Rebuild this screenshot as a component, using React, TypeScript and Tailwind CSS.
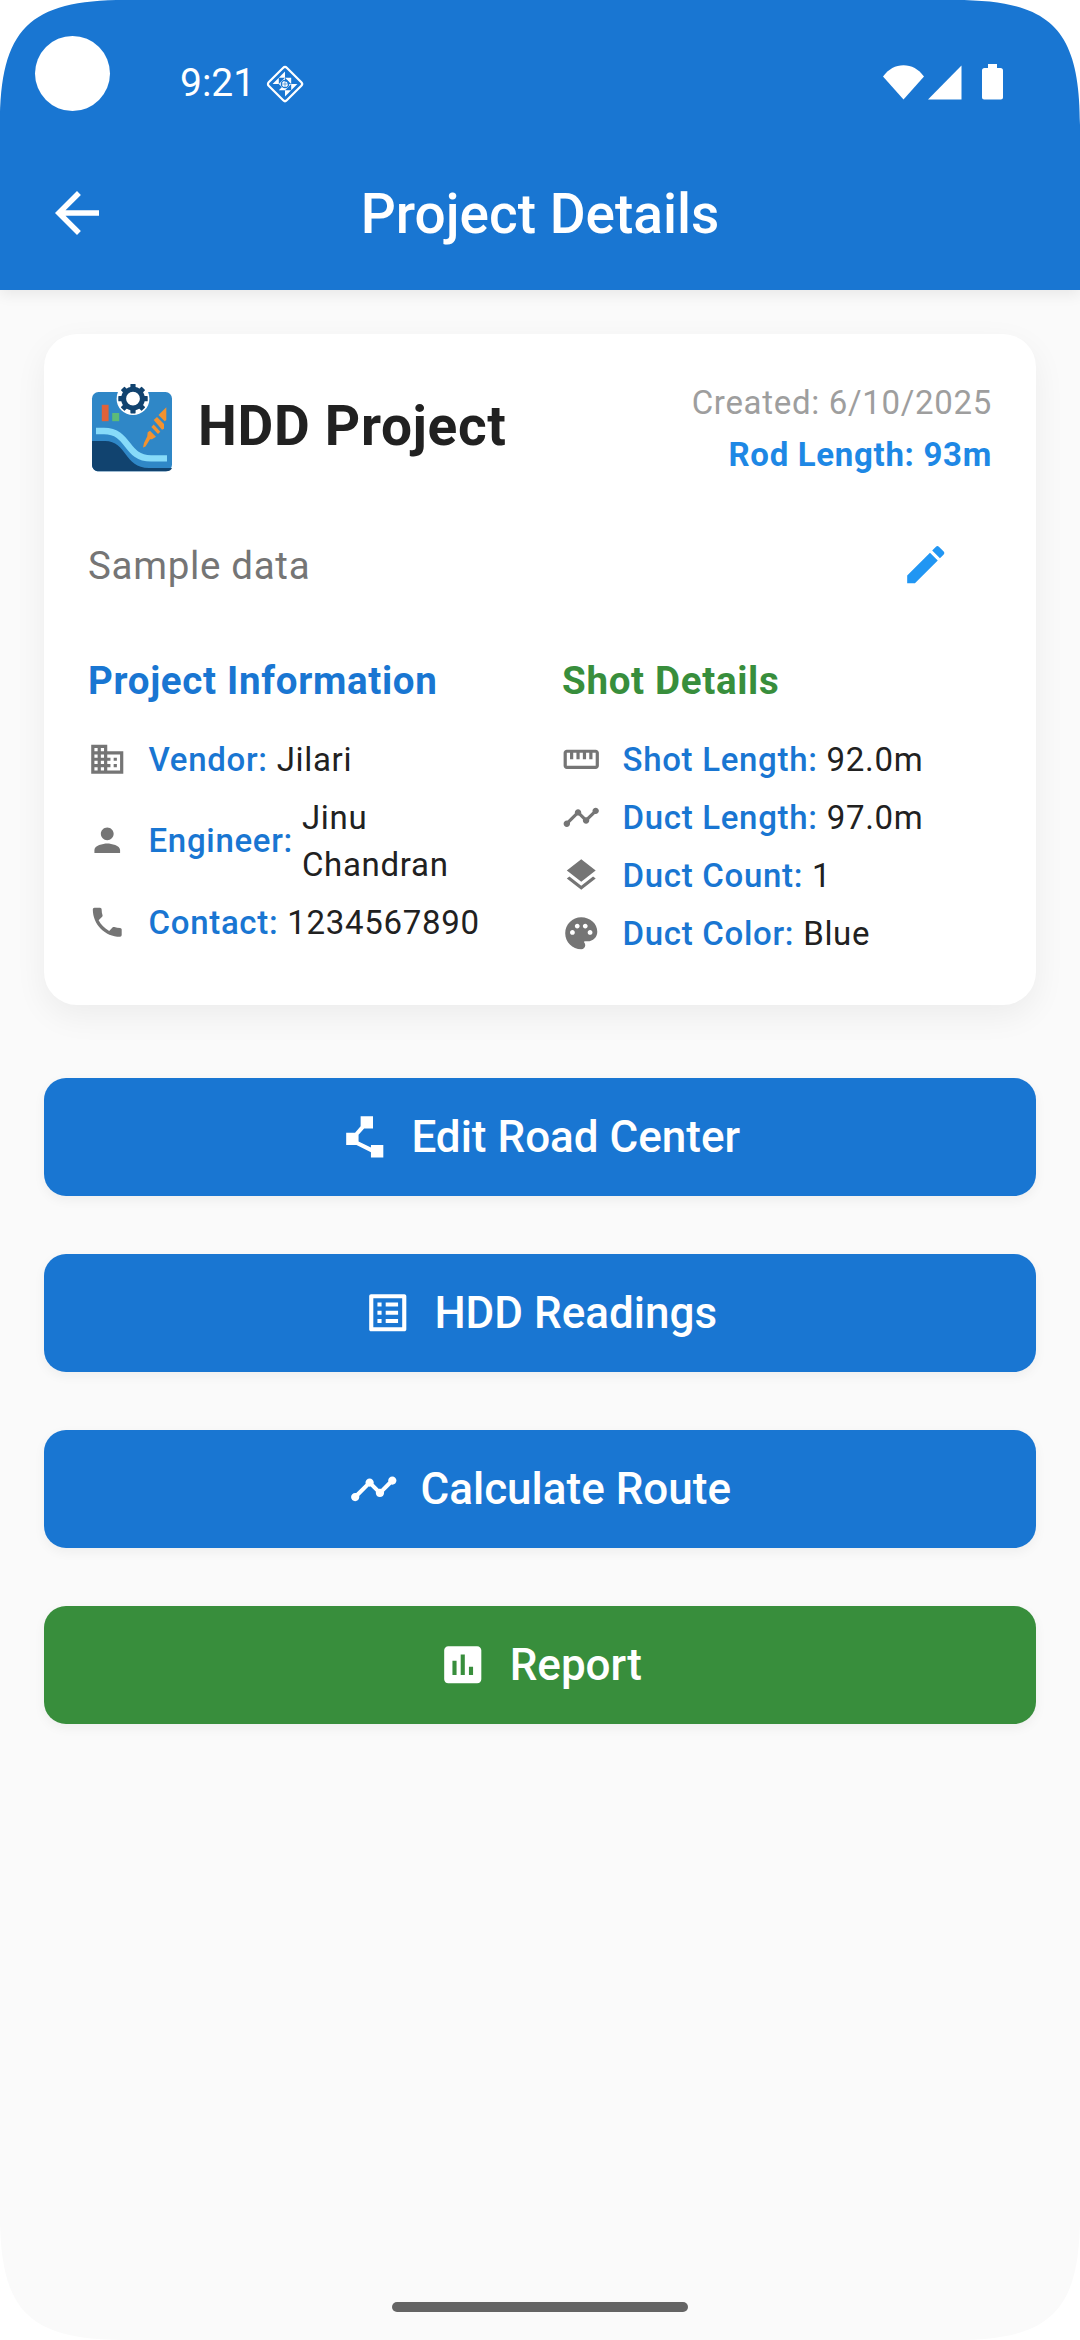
import type { ReactNode } from "react";
import type { IconType } from "react-icons";
import {
    MdArrowBack,
    MdAssessment,
    MdBusiness,
    MdEdit,
    MdLayers,
    MdListAlt,
    MdPerson,
    MdPhone,
    MdPolyline,
    MdStraighten,
    MdTimeline,
} from "react-icons/md";

function PaletteIcon({ className }: { className?: string }) {
    return (
        <svg viewBox="0 0 24 24" fill="currentColor" className={className}>
            <path d="M12 2C6.49 2 2 6.49 2 12s4.49 10 10 10c1.38 0 2.5-1.12 2.5-2.5 0-.61-.23-1.2-.64-1.67-.08-.1-.13-.21-.13-.33 0-.28.22-.5.5-.5H16c3.31 0 6-2.69 6-6 0-4.96-4.49-9-10-9zm5.5 11c-.83 0-1.5-.67-1.5-1.5s.67-1.5 1.5-1.5 1.5.67 1.5 1.5-.67 1.5-1.5 1.5zm-3-4c-.83 0-1.5-.67-1.5-1.5S13.67 6 14.5 6s1.5.67 1.5 1.5S15.33 9 14.5 9zM5 11.5c0-.83.67-1.5 1.5-1.5s1.5.67 1.5 1.5S7.33 13 6.5 13 5 12.33 5 11.5zm6-4c0 .83-.67 1.5-1.5 1.5S8 8.33 8 7.5 8.67 6 9.5 6s1.5.67 1.5 1.5z" />
        </svg>
    );
}

function ProjectLogo() {
    return (
        <svg viewBox="8 14 88 88" className="h-[88px] w-[88px] shrink-0">
            <rect x="12" y="22" width="80" height="79.3" rx="6.5" fill="#2f87c7" />
            <path d="M12 71H25C47 71 44 98 69 98H92C91.5 100 89 101.3 86 101.3H18.5C15 101.3 12 98.5 12 95Z" fill="#11436f" />
            <path d="M16 61H24C50 61 45 88.4 71 88.4H87" fill="none" stroke="#87dbf9" strokeWidth="6.4" />
            <rect x="21.8" y="34.8" width="6.8" height="16.4" fill="#e0623a" />
            <rect x="32.2" y="43" width="7" height="8.2" fill="#5dbb77" />
            {/* Drill bit */}
            <g fill="#f2922f">
                <path d="M86.3 37.3V50L84.7 51.2L78.5 45Z" />
                <path d="M73.7 50L77 47L84 54V58.7L82 59.8Z" />
                <path d="M71.3 57L73.7 54.6L80.3 61.7L78 64Z" />
                <path d="M70 60.7L76 66.7L72 69.2H70L65.5 76.5L63 77.4L64 73L67.2 66.5L67.7 62.3Z" />
            </g>
            {/* Gear */}
            <circle cx="53" cy="28.7" r="16.4" fill="#fff" />
            <g fill="#11436f">
                {[0, 45, 90, 135, 180, 225, 270, 315].map((angle) => (
                    <rect key={angle} x="50.4" y="14" width="5.2" height="6" rx="0.6" transform={`rotate(${angle} 53 28.7)`} />
                ))}
            </g>
            <circle cx="53" cy="28.7" r="9.4" fill="none" stroke="#11436f" strokeWidth="5" />
        </svg>
    );
}

function DiamondIcon({ className }: { className?: string }) {
    return (
        <svg viewBox="0 0 40 40" className={className}>
            <rect x="7.2" y="7.2" width="25.6" height="25.6" rx="2.5" fill="none" stroke="#fff" strokeWidth="2.2" transform="rotate(45 20 20)" />
            <g fill="#fff">
                <path d="M20 7.600V13.800H13.800Z" />
                <path d="M13.800 13.800V20H7.600Z" />
                <path d="M26.200 20H32.400L26.200 26.200Z" />
                <path d="M20 26.200H26.200L20 32.400Z" />
                <path d="M13.800 20H20V26.200Z" />
                <path d="M20 13.800H26.200V20Z" />
                <path d="M13.800 26.200L20 20V26.200Z" />
                <path d="M20 20H26.200L20 26.200Z" />
                <path d="M13.800 20L20 13.800V20Z" />
            </g>
            <circle cx="20" cy="20" r="3.6" fill="none" stroke="#1976d2" strokeWidth="1.4" />
            <circle cx="20" cy="20" r="2.6" fill="#fff" />
            <path d="M20 17V23M17 20H23" stroke="#1976d2" strokeWidth="0.6" />
        </svg>
    );
}

function ScreenCorner({ className }: { className: string }) {
    return (
        <svg viewBox="0 0 125 125" fill="#fff" className={`absolute h-[125px] w-[125px] ${className}`}>
            <path d="M0 0H125C29 0 0 29 0 125Z" />
        </svg>
    );
}

function StatusBar() {
    return (
        <div className="flex h-[136px] items-start justify-between pr-[77px] pl-[35px]">
            <div className="flex">
                <div className="mt-9 h-[75px] w-[75px] rounded-full bg-white" />
                <span className="mt-[60px] ml-[70px] text-[39px] leading-[46px]">9:21</span>
                <DiamondIcon className="mt-[63.5px] ml-[10px] h-10 w-10" />
            </div>
            <svg viewBox="0 0 120 36" className="mt-16 h-9 w-[120px]">
                <g fill="#fff">
                    <path d="M0 12.500C5.500 5 12.500 1.200 20.500 1.200S35.500 5 41 12.500L20.500 35.500Z" />
                    <path d="M45 35.600L78.500 1.600V35.600Z" />
                    <path d="M105 0h9v4h3.500q2.500 0 2.500 2.500V33.500q0 2.100-2.100 2.100H101.100q-2.100 0-2.100-2.100V6.500Q99 4 101.500 4H105z" />
                </g>
            </svg>
        </div>
    );
}

function DetailRow({ icon, label, value }: { icon: ReactNode; label: string; value: string }) {
    return (
        <div className="flex items-center py-[5.5px] text-[33px] leading-[47px]">
            <span className="mr-[22px] shrink-0 text-[#757575]">{icon}</span>
            <span className="mr-[9px] shrink-0 font-medium text-[#1976d2]">{label}:</span>
            <span className="min-w-0 flex-1 text-[#212121]">{value}</span>
        </div>
    );
}

const iconSize = "h-[38.5px] w-[38.5px]";

const projectInfo = [
    { icon: <MdBusiness className={iconSize} />, label: "Vendor", value: "Jilari" },
    { icon: <MdPerson className={iconSize} />, label: "Engineer", value: "Jinu Chandran" },
    { icon: <MdPhone className={iconSize} />, label: "Contact", value: "1234567890" },
];

const shotDetails = [
    { icon: <MdStraighten className={iconSize} />, label: "Shot Length", value: "92.0m" },
    { icon: <MdTimeline className={iconSize} />, label: "Duct Length", value: "97.0m" },
    { icon: <MdLayers className={iconSize} />, label: "Duct Count", value: "1" },
    { icon: <PaletteIcon className={iconSize} />, label: "Duct Color", value: "Blue" },
];

const actions: { icon: IconType; label: string; color: string }[] = [
    { icon: MdPolyline, label: "Edit Road Center", color: "bg-[#1976d2]" },
    { icon: MdListAlt, label: "HDD Readings", color: "bg-[#1976d2]" },
    { icon: MdTimeline, label: "Calculate Route", color: "bg-[#1976d2]" },
    { icon: MdAssessment, label: "Report", color: "bg-[#388e3c]" },
];

export default function App() {
    return (
        <div className="relative flex h-[2340px] w-[1080px] flex-col overflow-hidden bg-[#fafafa] font-['Roboto',sans-serif]">
            {/* Header */}
            <header className="h-[290px] bg-[#1976d2] text-white shadow-[0_4px_14px_rgba(0,0,0,0.08)]">
                <StatusBar />
                <div className="grid h-[154px] grid-cols-[1fr_auto_1fr] items-center px-11">
                    <button className="w-fit">
                        <MdArrowBack className="h-[66px] w-[66px]" />
                    </button>
                    <h1 className="pt-[3px] text-[55px] font-medium">Project Details</h1>
                </div>
            </header>

            <main className="flex-1 px-11 pt-11">
                {/* Project card */}
                <section className="h-[671px] rounded-[33px] bg-white p-11 tracking-[0.6875px] shadow-[0_11px_33px_rgba(0,0,0,0.06)]">
                    <div className="flex h-[100px] items-center justify-between">
                        <div className="flex items-center gap-[22px]">
                            <ProjectLogo />
                            <h2 className="pb-[3px] text-[55px] leading-[75px] font-bold text-[#212121]">HDD Project</h2>
                        </div>
                        <div className="flex flex-col items-end gap-[5px] text-[33px] leading-[47px]">
                            <span className="text-[#9e9e9e]">Created: 6/10/2025</span>
                            <span className="font-bold text-[#1e88e5]">Rod Length: 93m</span>
                        </div>
                    </div>

                    <div className="mt-[21px] flex h-[132px] items-center justify-between">
                        <p className="text-[38.5px] leading-[55px] text-[#757575]">Sample data</p>
                        <button className="flex h-[132px] w-[132px] items-center justify-center text-[#2196f3]">
                            <MdEdit className="h-[49.5px] w-[49.5px]" />
                        </button>
                    </div>

                    <div className="mt-[22px] grid grid-cols-2 gap-11">
                        <div>
                            <h3 className="mb-[22px] text-[38.5px] leading-[55px] font-bold text-[#1976d2]">Project Information</h3>
                            {projectInfo.map((row) => (
                                <DetailRow key={row.label} {...row} />
                            ))}
                        </div>
                        <div>
                            <h3 className="mb-[22px] text-[38.5px] leading-[55px] font-bold text-[#388e3c]">Shot Details</h3>
                            {shotDetails.map((row) => (
                                <DetailRow key={row.label} {...row} />
                            ))}
                        </div>
                    </div>
                </section>

                {/* Actions */}
                <div className="mt-[73px] flex flex-col gap-[58px]">
                    {actions.map(({ icon: Icon, label, color }) => (
                        <button
                            key={label}
                            className={`flex h-[118px] items-center justify-center gap-[22px] rounded-[22px] text-[44px] font-medium text-white shadow-[0_4px_12px_rgba(0,0,0,0.05)] ${color}`}
                        >
                            <Icon className="h-[49.5px] w-[49.5px]" />
                            {label}
                        </button>
                    ))}
                </div>
            </main>

            {/* Gesture bar */}
            <div className="mx-auto mb-7 h-2.5 w-[296px] rounded-full bg-[#646464]" />

            <ScreenCorner className="top-0 left-0" />
            <ScreenCorner className="top-0 right-0 rotate-90" />
            <ScreenCorner className="right-0 bottom-0 rotate-180" />
            <ScreenCorner className="bottom-0 left-0 -rotate-90" />
        </div>
    );
}
